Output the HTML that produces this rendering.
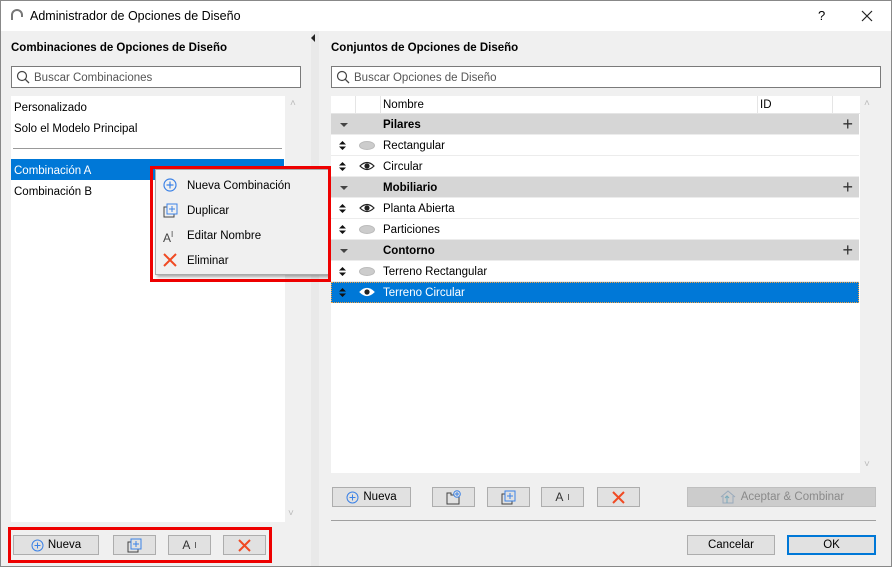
<!DOCTYPE html>
<html><head><meta charset="utf-8">
<style>
*{box-sizing:border-box;margin:0;padding:0}
body{width:892px;height:567px;background:#f0f0f0;font-family:"Liberation Sans",sans-serif;font-size:11.5px;color:#000;position:relative;overflow:hidden}
.a{position:absolute}
.win{left:0;top:0;width:892px;height:567px;border:1px solid #888}
.title{left:1px;top:1px;width:890px;height:30px;background:#fff}
.h{font-weight:bold;font-size:11.5px}
.search{background:#fff;border:1px solid #7a7a7a;height:22px}
.search span{position:absolute;left:22px;top:5px;color:#555}
.white{background:#fff}
.btn{background:#e1e1e1;border:1px solid #adadad;height:20px;display:flex;align-items:center;justify-content:center;gap:4px}
.row{position:absolute;left:0;width:528px;height:21px;border-bottom:1px solid #ececec}
.grp{background:#d6d6d6;font-weight:bold}
.row .t{position:absolute;left:52px;top:5px}
.sel{background:#0078d7;color:#fff;border:1px dotted #f0a040}
.arr{position:absolute;left:8px;top:6px}
.tri{position:absolute;left:9px;top:9px;width:0;height:0;border-left:4px solid transparent;border-right:4px solid transparent;border-top:4px solid #444}
.plus{position:absolute;right:6px;top:0px;font-size:18px;font-weight:normal;color:#333}
</style></head><body>
<div class="a win"></div>
<div class="a title"></div>
<svg class="a" style="left:10px;top:9px" width="14" height="12"><path d="M2 11 V6 A5 5 0 0 1 12 6 V8" fill="none" stroke="#777" stroke-width="2"/></svg>
<div class="a" style="left:30px;top:9px;font-size:12.5px">Administrador de Opciones de Diseño</div>
<div class="a" style="left:818px;top:8px;font-size:13px">?</div>
<svg class="a" style="left:861px;top:10px" width="12" height="12"><path d="M1 1L11 11M11 1L1 11" stroke="#222" stroke-width="1.2"/></svg>

<div class="a" style="left:311px;top:31px;width:8px;height:535px;background:#e9e9e9"></div>
<div class="a" style="left:311px;top:34px;width:0;height:0;border-top:4px solid transparent;border-bottom:4px solid transparent;border-right:4px solid #222"></div>

<div class="a h" style="left:11px;top:42px">Combinaciones de Opciones de Diseño</div>
<div class="a search" style="left:11px;top:66px;width:290px"><svg class="a" style="left:4px;top:3px" width="14" height="14"><circle cx="6" cy="6" r="4.5" fill="none" stroke="#444" stroke-width="1.2"/><path d="M9.3 9.3L13 13" stroke="#444" stroke-width="1.3"/></svg><span>Buscar Combinaciones</span></div>
<div class="a white" style="left:11px;top:96px;width:274px;height:426px"></div>
<div class="a" style="left:290px;top:98px;color:#bbb;font-size:10px">&#x2C4;</div>
<div class="a" style="left:288px;top:508px;color:#bbb;font-size:10px">&#x2C5;</div>
<div class="a" style="left:14px;top:102px">Personalizado</div>
<div class="a" style="left:14px;top:123px">Solo el Modelo Principal</div>
<div class="a" style="left:13px;top:148px;width:269px;height:1px;background:#999"></div>
<div class="a" style="left:11px;top:159px;width:273px;height:21px;background:#0078d7"></div>
<div class="a" style="left:14px;top:165px;color:#fff">Combinación A</div>
<div class="a" style="left:14px;top:186px">Combinación B</div>

<div class="a" style="left:155px;top:169px;width:175px;height:106px;background:#f0f0f0;border:1px solid #aaa;box-shadow:2px 2px 3px rgba(0,0,0,.35)"></div>
<div class="a" style="left:150px;top:166px;width:181px;height:116px;border:3px solid #e00"></div>
<svg class="a" style="left:163px;top:178px" width="14" height="14"><circle cx="7" cy="7" r="6" fill="none" stroke="#3c82e6" stroke-width="1.2"/><path d="M7 3.5V10.5M3.5 7H10.5" stroke="#3c82e6" stroke-width="1.2"/></svg>
<div class="a" style="left:187px;top:180px">Nueva Combinación</div>
<svg class="a" style="left:163px;top:203px" width="15" height="15"><rect x="1" y="4" width="10" height="10" fill="#f0f0f0" stroke="#444"/><rect x="4" y="1" width="10" height="10" fill="#f0f0f0" stroke="#3c82e6"/><path d="M9 3V9M6 6H12" stroke="#3c82e6"/></svg>
<div class="a" style="left:187px;top:205px">Duplicar</div>
<div class="a" style="left:163px;top:230px;color:#444;font-size:12px">A<sup style="font-size:8px">I</sup></div>
<div class="a" style="left:187px;top:230px">Editar Nombre</div>
<svg class="a" style="left:163px;top:253px" width="14" height="14"><path d="M1 1L13 13M13 1L1 13" stroke="#f04a23" stroke-width="2"/></svg>
<div class="a" style="left:187px;top:255px">Eliminar</div>

<div class="a btn" style="left:13px;top:535px;width:86px"><svg width="13" height="13"><circle cx="6.5" cy="6.5" r="5.5" fill="none" stroke="#3c82e6"/><path d="M6.5 3.5V9.5M3.5 6.5H9.5" stroke="#3c82e6"/></svg>Nueva</div>
<div class="a btn" style="left:113px;top:535px;width:43px"><svg width="15" height="15"><rect x="1" y="4" width="10" height="10" fill="#e1e1e1" stroke="#444"/><rect x="4" y="1" width="10" height="10" fill="#e1e1e1" stroke="#3c82e6"/><path d="M9 3V9M6 6H12" stroke="#3c82e6"/></svg></div>
<div class="a btn" style="left:168px;top:535px;width:43px;color:#333;font-size:12px">A<sup style="font-size:8px">I</sup></div>
<div class="a btn" style="left:223px;top:535px;width:43px"><svg width="13" height="13"><path d="M1 1L12 12M12 1L1 12" stroke="#f04a23" stroke-width="2"/></svg></div>
<div class="a" style="left:8px;top:527px;width:264px;height:36px;border:3px solid #e00"></div>

<div class="a h" style="left:331px;top:42px">Conjuntos de Opciones de Diseño</div>
<div class="a search" style="left:331px;top:66px;width:550px"><svg class="a" style="left:4px;top:3px" width="14" height="14"><circle cx="6" cy="6" r="4.5" fill="none" stroke="#444" stroke-width="1.2"/><path d="M9.3 9.3L13 13" stroke="#444" stroke-width="1.3"/></svg><span>Buscar Opciones de Diseño</span></div>
<div class="a white" style="left:331px;top:96px;width:529px;height:377px">
 <div class="a" style="left:0;top:0;width:529px;height:18px;border-bottom:1px solid #e5e5e5"></div>
 <div class="a" style="left:24px;top:0;width:1px;height:18px;background:#e5e5e5"></div>
 <div class="a" style="left:49px;top:0;width:1px;height:18px;background:#e5e5e5"></div>
 <div class="a" style="left:426px;top:0;width:1px;height:18px;background:#e5e5e5"></div>
 <div class="a" style="left:501px;top:0;width:1px;height:18px;background:#e5e5e5"></div>
 <div class="a" style="left:52px;top:3px">Nombre</div>
 <div class="a" style="left:429px;top:3px">ID</div>
 <div class="row grp" style="top:18px"><div class="tri"></div><span class="t">Pilares</span><span class="plus">+</span></div>
 <div class="row" style="top:39px"><svg class="arr" width="7" height="9"><path d="M0 3.5L3.5 0L7 3.5ZM0 5.5L3.5 9L7 5.5Z" fill="#111"/></svg><svg class="a" style="left:28px;top:6px" width="16" height="9"><ellipse cx="8" cy="4.5" rx="7.5" ry="4" fill="#ccc" stroke="#bbb"/></svg><span class="t">Rectangular</span></div>
 <div class="row" style="top:60px"><svg class="arr" width="7" height="9"><path d="M0 3.5L3.5 0L7 3.5ZM0 5.5L3.5 9L7 5.5Z" fill="#111"/></svg><svg class="a" style="left:28px;top:5px" width="16" height="10"><path d="M1 5Q8 -2 15 5Q8 12 1 5Z" fill="#fff" stroke="#222" stroke-width="1.2"/><circle cx="8" cy="5" r="2.6" fill="#222"/></svg><span class="t">Circular</span></div>
 <div class="row grp" style="top:81px"><div class="tri"></div><span class="t">Mobiliario</span><span class="plus">+</span></div>
 <div class="row" style="top:102px"><svg class="arr" width="7" height="9"><path d="M0 3.5L3.5 0L7 3.5ZM0 5.5L3.5 9L7 5.5Z" fill="#111"/></svg><svg class="a" style="left:28px;top:5px" width="16" height="10"><path d="M1 5Q8 -2 15 5Q8 12 1 5Z" fill="#fff" stroke="#222" stroke-width="1.2"/><circle cx="8" cy="5" r="2.6" fill="#222"/></svg><span class="t">Planta Abierta</span></div>
 <div class="row" style="top:123px"><svg class="arr" width="7" height="9"><path d="M0 3.5L3.5 0L7 3.5ZM0 5.5L3.5 9L7 5.5Z" fill="#111"/></svg><svg class="a" style="left:28px;top:6px" width="16" height="9"><ellipse cx="8" cy="4.5" rx="7.5" ry="4" fill="#ccc" stroke="#bbb"/></svg><span class="t">Particiones</span></div>
 <div class="row grp" style="top:144px"><div class="tri"></div><span class="t">Contorno</span><span class="plus">+</span></div>
 <div class="row" style="top:165px"><svg class="arr" width="7" height="9"><path d="M0 3.5L3.5 0L7 3.5ZM0 5.5L3.5 9L7 5.5Z" fill="#111"/></svg><svg class="a" style="left:28px;top:6px" width="16" height="9"><ellipse cx="8" cy="4.5" rx="7.5" ry="4" fill="#ccc" stroke="#bbb"/></svg><span class="t">Terreno Rectangular</span></div>
 <div class="row sel" style="top:186px"><svg class="arr" style="left:7px;top:5px" width="7" height="9"><path d="M0 3.5L3.5 0L7 3.5ZM0 5.5L3.5 9L7 5.5Z" fill="#111"/></svg><svg class="a" style="left:27px;top:4px" width="16" height="10"><path d="M1 5Q8 -2 15 5Q8 12 1 5Z" fill="#fff" stroke="#fff" stroke-width="1.2"/><circle cx="8" cy="5" r="2.6" fill="#222"/></svg><span class="t" style="left:51px;top:4px">Terreno Circular</span></div>
</div>
<div class="a" style="left:864px;top:98px;color:#bbb;font-size:10px">&#x2C4;</div>
<div class="a" style="left:864px;top:459px;color:#bbb;font-size:10px">&#x2C5;</div>

<div class="a btn" style="left:332px;top:487px;width:79px"><svg width="13" height="13"><circle cx="6.5" cy="6.5" r="5.5" fill="none" stroke="#3c82e6"/><path d="M6.5 3.5V9.5M3.5 6.5H9.5" stroke="#3c82e6"/></svg>Nueva</div>
<div class="a btn" style="left:432px;top:487px;width:43px"><svg width="16" height="15"><path d="M1 3H5V5H13V14H1Z" fill="none" stroke="#444"/><circle cx="11" cy="4" r="3.3" fill="#e1e1e1" stroke="#3c82e6"/><path d="M11 2V6M9 4H13" stroke="#3c82e6"/></svg></div>
<div class="a btn" style="left:487px;top:487px;width:43px"><svg width="15" height="15"><rect x="1" y="4" width="10" height="10" fill="#e1e1e1" stroke="#444"/><rect x="4" y="1" width="10" height="10" fill="#e1e1e1" stroke="#3c82e6"/><path d="M9 3V9M6 6H12" stroke="#3c82e6"/></svg></div>
<div class="a btn" style="left:541px;top:487px;width:43px;color:#333;font-size:12px">A<sup style="font-size:8px">I</sup></div>
<div class="a btn" style="left:597px;top:487px;width:43px"><svg width="13" height="13"><path d="M1 1L12 12M12 1L1 12" stroke="#f04a23" stroke-width="2"/></svg></div>
<div class="a btn" style="left:687px;top:487px;width:189px;background:#cccccc;border-color:#bfbfbf;color:#8a8a8a"><svg width="18" height="14"><path d="M2 7L9 1L16 7M4 6V13H14V6" fill="none" stroke="#9ab"/><path d="M8 13V6M6 8L8 6L10 8" stroke="#7ab" fill="none"/></svg>Aceptar &amp; Combinar</div>
<div class="a" style="left:331px;top:520px;width:545px;height:1px;background:#a0a0a0"></div>
<div class="a btn" style="left:687px;top:535px;width:88px">Cancelar</div>
<div class="a btn" style="left:787px;top:535px;width:89px;border:2px solid #0078d7">OK</div>
</body></html>
